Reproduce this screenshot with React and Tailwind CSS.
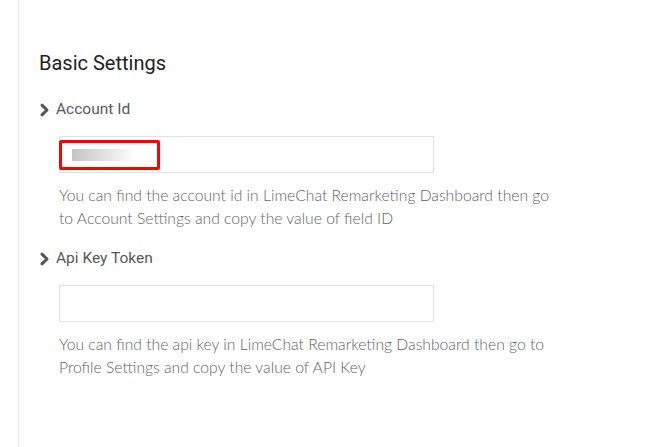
import React from 'react';

const Chevron = () => (
  <svg width="11" height="14" viewBox="0 0 11 14" className="shrink-0">
    <polyline points="3,2.2 8,7 3,11.8" fill="none" stroke="#555555" strokeWidth="3" strokeLinecap="round" strokeLinejoin="round" />
  </svg>
);

const Field = ({ label, help, masked }) => (
  <div>
    <div className="flex items-center gap-[6px] h-[20px]">
      <Chevron />
      <span className="text-[15.5px] font-normal text-[#585858]" style={{ fontFamily: 'Roboto, sans-serif' }}>
        {label}
      </span>
    </div>
    <div className="pl-[20px] mt-[16px]">
      <div className="relative w-[375px] h-[37px] border border-[#e2e2e2] bg-white">
        {masked && (
          <div className="absolute left-[-1px] top-[3px] w-[101px] h-[30px] border-[3px] border-[#ff0000] rounded-[2px] flex items-center">
            <div className="ml-[10px] w-[60px] h-[12px] bg-gradient-to-r from-[#c4c4c4] to-[#fafafa]" />
          </div>
        )}
      </div>
      <p
        className="mt-[11px] text-[15.7px] leading-[22.5px] font-light text-[#636363] w-[504px]"
        style={{ fontFamily: 'Lato, sans-serif' }}
      >
        {help}
      </p>
    </div>
  </div>
);

export default function App() {
  return (
    <div className="w-[662px] h-[447px] bg-white flex overflow-hidden">
      <div className="w-[19px] border-r border-[#e6e6e6] h-full" />
      <div className="pl-[20px] pt-[50px] flex-1">
        <h2 className="text-[20px] leading-[26px] text-[#222222]" style={{ fontFamily: 'Roboto, sans-serif' }}>
          Basic Settings
        </h2>
        <div className="mt-[24px] flex flex-col gap-[20px]">
          <Field
            label="Account Id"
            masked
            help="You can find the account id in LimeChat Remarketing Dashboard then go to Account Settings and copy the value of field ID"
          />
          <Field
            label="Api Key Token"
            help="You can find the api key in LimeChat Remarketing Dashboard then go to Profile Settings and copy the value of API Key"
          />
        </div>
      </div>
    </div>
  );
}
